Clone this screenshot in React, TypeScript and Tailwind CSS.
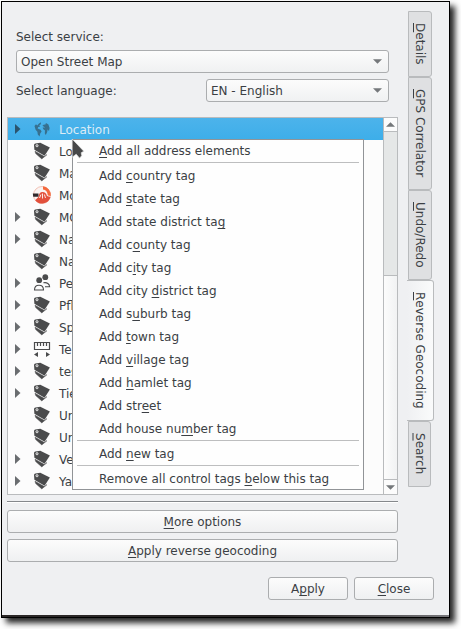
import React from 'react';

type Kind = 'globe' | 'tag' | 'dial' | 'people' | 'ruler';

const rows: { label: string; kind: Kind; open?: boolean }[] = [
  { label: 'Location', kind: 'globe', open: true },
  { label: 'Lo', kind: 'tag' },
  { label: 'Ma', kind: 'tag' },
  { label: 'Mo', kind: 'dial' },
  { label: 'MO', kind: 'tag', open: true },
  { label: 'Na', kind: 'tag', open: true },
  { label: 'Na', kind: 'tag' },
  { label: 'Pe', kind: 'people', open: true },
  { label: 'Pfl', kind: 'tag', open: true },
  { label: 'Sp', kind: 'tag', open: true },
  { label: 'Te', kind: 'ruler', open: true },
  { label: 'tes', kind: 'tag', open: true },
  { label: 'Tie', kind: 'tag', open: true },
  { label: 'Un', kind: 'tag' },
  { label: 'Un', kind: 'tag' },
  { label: 'Ve', kind: 'tag', open: true },
  { label: 'Ya', kind: 'tag', open: true },
];

// An ampersand marks the letter that follows it as the keyboard mnemonic.
const tagItems = [
  'Add &country tag',
  'Add &state tag',
  'Add state district ta&g',
  'Add c&ounty tag',
  'Add c&ity tag',
  'Add city &district tag',
  'Add s&uburb tag',
  'Add &town tag',
  'Add &village tag',
  'Add &hamlet tag',
  'Add str&eet',
  'Add house nu&mber tag',
];

function Mnemonic({ text, offset = 'underline-offset-2' }: { text: string; offset?: string }) {
  const i = text.indexOf('&');
  if (i < 0) return <span>{text}</span>;
  return (
    <span className="whitespace-pre">
      {text.slice(0, i)}
      <span className={`underline decoration-1 [text-decoration-skip-ink:none] ${offset}`}>{text[i + 1]}</span>
      {text.slice(i + 2)}
    </span>
  );
}

function RowIcon({ kind }: { kind: Kind }) {
  if (kind === 'tag')
    return (
      <svg width="20" height="18" viewBox="0 0 20 18" className="block">
        <path d="M2 3Q2 1.8 3.4 1.5L8.3 .8 17.9 5.4 12.6 13.8 2.4 7.8Z" fill="#4a4b4c" />
        <path d="M3 9.2 12.4 14.6 15 12.6 9.8 16.9 3.7 11.6Z" fill="#4a4b4c" stroke="#4a4b4c" strokeWidth=".5" />
        <circle cx="5" cy="3.7" r="1.1" fill="#6b6c6d" stroke="#fcfcfc" strokeWidth=".8" />
      </svg>
    );
  if (kind === 'globe')
    return (
      <svg width="20" height="18" viewBox="0 0 20 18" className="block" fill="#37708f">
        <path d="M2.5 6 4 4.2 5.2 5.6 7 3.4 9 2.2 8.8 4.2 7.2 5.2 8.2 6.5 6.2 7 5.6 8.6 8.6 9.8 9.6 11.4 8.2 13.5 7.6 16.4 5.8 14.6 5.4 11.8 3.6 9.8Z" />
        <path d="M10.4 5.8 12 4.4 13.2 4.8 14 3 16.4 4.6 17.6 8 17 11 15.6 9.6 15.2 12 13.8 15 12.8 13.6 13 10.6 11.4 9.2 10.6 7.6 13.2 7.4Z" />
      </svg>
    );
  if (kind === 'dial')
    return (
      <svg width="20" height="20" viewBox="0 0 20 20" className="block">
        <circle cx="10" cy="10" r="8.5" fill="#faf3f1" stroke="#efb5a6" strokeWidth=".8" />
        <path d="M11 1.3A8.8 8.8 0 0 1 18.7 11L15.8 10.5Q15.5 5 11 4.4Z" fill="#f4683c" />
        <path d="M3.2 15.2A8.7 8.7 0 0 0 18.5 12L15 11Q14 7 10.5 7 7 7 6.4 12Z" fill="#e2503c" />
        <path d="M.8 8.6H6.5V11.8H1.2Z" fill="#30282b" />
        <path d="M7.5 13 9 9.5M10.5 13.5V8.5M13.5 13 12.4 9.5" fill="none" stroke="#fbe9e4" strokeWidth="1" />
      </svg>
    );
  if (kind === 'people')
    return (
      <svg width="20" height="18" viewBox="0 0 20 18" className="block" fill="#4a4b4c">
        <circle cx="7.2" cy="6.2" r="2.9" />
        <circle cx="13.3" cy="3.2" r="2.9" />
        <path d="M2.5 16C2.5 9.6 11.5 9.6 11.5 16ZM11.4 8.8C15 8 17.6 10 17.6 12.7H13" fill="none" stroke="#4a4b4c" strokeWidth="1.1" />
      </svg>
    );
  return (
    <svg width="20" height="18" viewBox="0 0 20 18" className="block">
      <path d="M2.5 2.5H17.5V9.5H2.5ZM5.5 3V6M8.5 3V6M11.5 3V6M14.5 3V6" fill="none" stroke="#4a4b4c" strokeWidth="1.2" />
      <path d="M6 12V17L2 14.5ZM14 12V17L18 14.5Z" fill="#4a4b4c" />
    </svg>
  );
}

function Down() {
  return (
    <svg width="9" height="5" viewBox="0 0 9 5" className="block">
      <path d="M0 .3H9L4.5 4.8Z" fill="#75787b" />
    </svg>
  );
}

function Combo({ text, className }: { text: string; className: string }) {
  return (
    <div className={`flex h-[23px] items-center justify-between rounded-[3px] border border-[#abadaf] bg-linear-to-b from-[#fcfcfc] to-[#f0f1f2] pr-[6px] pl-[4px] ${className}`}>
      <span>{text}</span>
      <Down />
    </div>
  );
}

function Button({ text, className }: { text: string; className: string }) {
  return (
    <button className={`flex h-[23px] items-center justify-center rounded-[3px] border border-[#abadaf] bg-linear-to-b from-[#fcfcfc] to-[#eff0f1] ${className}`}>
      <Mnemonic text={text} />
    </button>
  );
}

function SideTab({ text, className }: { text: string; className: string }) {
  return (
    <div className={`flex items-center justify-center rounded-r-[3px] border border-[#b9bbbd] [writing-mode:vertical-rl] ${className}`}>
      <Mnemonic text={text} offset="underline-offset-[-1px]" />
    </div>
  );
}

function Separator() {
  return <div className="mx-[4px] h-[2px] border-t border-[#bdbebf]" />;
}

function MenuItem({ text, className = 'h-[23px]' }: { text: string; className?: string }) {
  return (
    <div className={`flex items-center pl-[26px] ${className}`}>
      <Mnemonic text={text} />
    </div>
  );
}

export default function App() {
  return (
    <div className="h-[629px] w-[461px] overflow-hidden bg-white pt-px pl-px font-['DejaVu_Sans',sans-serif] text-[12px] leading-[14px] text-[#3b3f44]">
      <div className="relative flex h-[617px] w-[449px] flex-col border border-black bg-[#eff0f2] shadow-[5px_5px_6px_0px_rgba(0,0,0,0.85)]">
        <div className="flex h-[575px] shrink-0">
          <div className="ml-[5px] w-[391px] shrink-0">
            <div className="mt-[28px] ml-[9px] h-[20px]">Select service:</div>
            <Combo text="Open Street Map" className="ml-[9px] w-[373px]" />
            <div className="mt-[6px] ml-[9px] flex w-[373px] items-center justify-between">
              <span>Select language:</span>
              <Combo text="EN - English" className="w-[183px]" />
            </div>
            <div className="mt-[15px] flex h-[378px] border border-[#b9bbbd] bg-[#fcfcfc]">
              <div className="w-[375px]">
                {rows.map((r, i) => (
                  <div
                    key={i}
                    className={`flex h-[22px] items-center ${i === 0 ? 'bg-linear-to-b from-[#4cb3eb] to-[#3daee9] text-[#dcecf6]' : ''}`}
                  >
                    <div className="w-[24px] pl-[7px]">
                      {r.open && (
                        <svg width="6" height="10" viewBox="0 0 6 10" className="block">
                          <path d="M0 0 5.5 5 0 10Z" fill={i === 0 ? '#2b546e' : '#6a6d70'} />
                        </svg>
                      )}
                    </div>
                    <div className="w-[27px]">
                      <RowIcon kind={r.kind} />
                    </div>
                    <span className="pt-[2px]">{r.label}</span>
                  </div>
                ))}
              </div>
              <div className="flex w-[14px] flex-col border-l border-[#b9bbbd]">
                <div className="flex h-[14px] items-center justify-center border-b border-[#b9bbbd]">
                  <div className="rotate-180">
                    <Down />
                  </div>
                </div>
                <div className="h-[144px] border-b border-[#b9bbbd] bg-[#e5e7e7]" />
                <div className="flex-1 bg-linear-to-r from-[#fcfcfc] to-[#f1f2f3]" />
                <div className="flex h-[15px] items-center justify-center border-t border-[#b9bbbd]">
                  <Down />
                </div>
              </div>
            </div>
            <div className="mt-[6px] h-[2px] border-t border-[#85888c] bg-white" />
            <Button text="&More options" className="mt-[7px] w-[391px]" />
            <Button text="&Apply reverse geocoding" className="mt-[6px] w-[391px]" />
          </div>
          <div className="mt-[9px] ml-[9px] flex w-[28px] flex-col items-start">
            <SideTab text="&Details" className="ml-px h-[66px] w-[24px] bg-[#dfe0e2]" />
            <SideTab text="&GPS Correlator" className="ml-px h-[113px] w-[24px] bg-[#dfe0e2]" />
            <SideTab text="&Undo/Redo" className="ml-px h-[90px] w-[24px] bg-[#dfe0e2]" />
            <SideTab text="&Reverse Geocoding" className="h-[141px] w-[27px] border-l-0 bg-linear-to-r from-[#eff0f2] to-[#fafbfb]" />
            <SideTab text="&Search" className="ml-px h-[66px] w-[23px] bg-[#dfe0e2]" />
          </div>
        </div>
        <div className="flex justify-end gap-[6px] pr-[15px]">
          <Button text="A&pply" className="w-[80px]" />
          <Button text="&Close" className="w-[80px]" />
        </div>
        <div className="mt-auto h-[2px] bg-linear-to-r from-[#2b2727] from-60% to-[#77777b]" />

        <div className="absolute top-[137px] left-[70px] w-[292px] border border-[#919497] bg-[#fefefe]">
          <MenuItem text="&Add all address elements" className="h-[22px]" />
          <Separator />
          {tagItems.map((t) => (
            <MenuItem key={t} text={t} />
          ))}
          <Separator />
          <MenuItem text="Add &new tag" />
          <Separator />
          <MenuItem text="Remove all control tags &below this tag" className="h-[22px] pt-[2px]" />
        </div>
        <svg width="14" height="22" viewBox="0 0 14 22" className="absolute top-[136px] left-[69px]">
          <path d="M1.2 1V19.2L5.2 16.2 8.6 20.2 10.8 17.6 10.2 14.8 12.8 13.2Z" fill="#474849" stroke="#e8e8e8" strokeWidth=".7" />
        </svg>
      </div>
    </div>
  );
}
